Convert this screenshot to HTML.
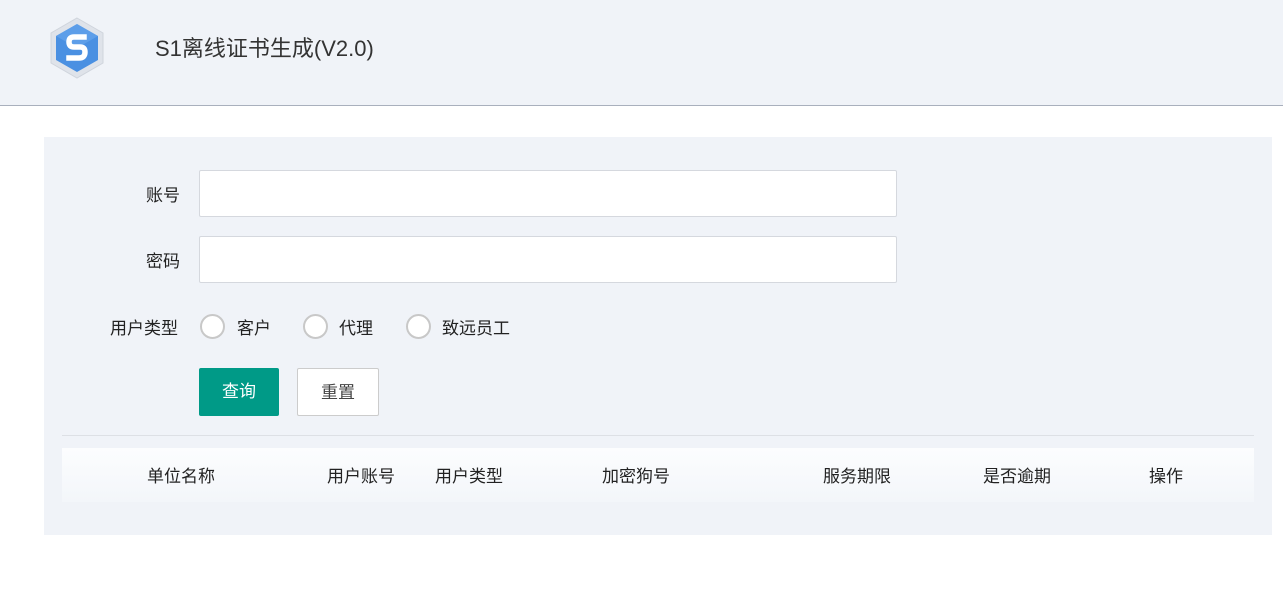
<!DOCTYPE html>
<html><head><meta charset="utf-8"><style>
*{margin:0;padding:0;box-sizing:border-box}
body{width:1283px;height:609px;background:#fff;font-family:"Liberation Sans","Noto Sans CJK SC",sans-serif;color:#222;position:relative;overflow:hidden;font-size:16px}
.hd{position:absolute;left:0;top:0;width:1283px;height:106px;background:#f0f3f8;border-bottom:1px solid #a9b0bd}
.title{position:absolute;left:155px;top:31px;font-size:22px;color:#333}
.panel{position:absolute;left:44px;top:137px;width:1228px;height:398px;background:#f0f3f8}
.a{position:absolute;white-space:nowrap}
.inp{position:absolute;left:199px;width:698px;height:47px;background:#fff;border:1px solid #d5d8de;border-radius:2px}
.r{position:absolute;width:25px;height:25px;border:2px solid #c8c8c8;border-radius:50%;background:#fff;top:314px}
.btn{position:absolute;top:368px;height:48px;width:81px;border-radius:2px;font-size:17px;text-align:center;line-height:47px}
.th{position:absolute;left:62px;top:448px;width:1192px;height:54px;background:linear-gradient(#fcfdfe,#f3f6fa)}
.c{position:absolute;top:462px;font-size:17px;transform:translateX(-50%)}
</style></head><body>
<div class="hd">
<svg style="position:absolute;left:49px;top:17px" width="56" height="62" viewBox="0 0 56 62">
<polygon points="28,1 54,16 54,46 28,61 2,46 2,16" fill="#dfe3ea" stroke="#cfd4dc"/>
<polygon points="28,7 49,19 49,43 28,55 7,43 7,19" fill="#4a90e2"/>
<polygon points="28,7 49,19 28,31 7,19" fill="#6aa8ee" opacity=".6"/>
<path d="M35 20 H25 Q20 20 20 25 Q20 30 25 30 H31 Q36 30 36 35 Q36 41 30 41 H20" fill="none" stroke="#fff" stroke-width="5.5" stroke-linejoin="round" stroke-linecap="square"/>
</svg>
<div class="title">S1离线证书生成(V2.0)</div>
</div>
<div class="panel"></div>
<div class="a" style="left:146px;top:181px;font-size:17px">账号</div>
<div class="inp" style="top:170px"></div>
<div class="a" style="left:146px;top:247px;font-size:17px">密码</div>
<div class="inp" style="top:236px"></div>
<div class="a" style="left:110px;top:314px;font-size:17px">用户类型</div>
<div class="r" style="left:200px"></div><div class="a" style="left:237px;top:314px;font-size:17px">客户</div>
<div class="r" style="left:303px"></div><div class="a" style="left:339px;top:314px;font-size:17px">代理</div>
<div class="r" style="left:406px"></div><div class="a" style="left:442px;top:314px;font-size:17px">致远员工</div>
<div class="btn" style="left:199px;width:80px;background:#009a87;color:#fff">查询</div>
<div class="btn" style="left:297px;width:82px;background:#fff;border:1px solid #ccc;color:#444">重置</div>
<div class="a" style="left:62px;top:435px;width:1192px;height:1px;background:#dde0e5"></div>
<div class="th"></div>
<div class="c" style="left:181px">单位名称</div>
<div class="c" style="left:361px">用户账号</div>
<div class="c" style="left:469px">用户类型</div>
<div class="c" style="left:636px">加密狗号</div>
<div class="c" style="left:857px">服务期限</div>
<div class="c" style="left:1017px">是否逾期</div>
<div class="c" style="left:1166px">操作</div>
</body></html>
